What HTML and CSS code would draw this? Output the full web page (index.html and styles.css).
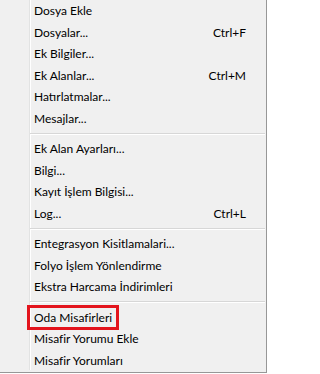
FILE: index.html
```html
<!DOCTYPE html>
<html lang="tr">
<head>
<meta charset="utf-8">
<title>Menü</title>
<link rel="stylesheet" href="styles.css">
</head>
<body>
<div class="menu">
  <div class="item"><span>Dosya Ekle</span></div>
  <div class="item"><span>Dosyalar...</span><span class="key">Ctrl+F</span></div>
  <div class="item"><span>Ek Bilgiler...</span></div>
  <div class="item"><span>Ek Alanlar...</span><span class="key">Ctrl+M</span></div>
  <div class="item"><span>Hatırlatmalar...</span></div>
  <div class="item"><span>Mesajlar...</span></div>
  <div class="sep"></div>
  <div class="item"><span>Ek Alan Ayarları...</span></div>
  <div class="item"><span>Bilgi...</span></div>
  <div class="item"><span>Kayıt İşlem Bilgisi...</span></div>
  <div class="item"><span>Log...</span><span class="key">Ctrl+L</span></div>
  <div class="sep"></div>
  <div class="item"><span>Entegrasyon Kisitlamalari...</span></div>
  <div class="item"><span>Folyo İşlem Yönlendirme</span></div>
  <div class="item"><span>Ekstra Harcama İndirimleri</span></div>
  <div class="sep"></div>
  <div class="item"><span class="hl">Oda Misafirleri</span></div>
  <div class="item"><span>Misafir Yorumu Ekle</span></div>
  <div class="item"><span>Misafir Yorumları</span></div>
</div>
</body>
</html>
```

FILE: styles.css
```css
html, body {
  margin: 0;
  padding: 0;
  background: #ffffff;
}

.menu {
  width: 266px;
  height: 372px;
  border-right: 1px solid #979797;
  border-bottom: 1px solid #979797;
  background:
    linear-gradient(to right,
      transparent 29px,
      #e2e3e3 29px, #e2e3e3 30px,
      #ffffff 30px, #ffffff 31px,
      transparent 31px) no-repeat 0 0 / 100% 370px,
    #f0f0f0;
  font-family: "Lato", "Liberation Sans", sans-serif;
  font-size: 12px;
  color: #000000;
  display: flex;
  flex-direction: column;
}

.item {
  height: 21.5px;
  flex: none;
  display: flex;
  align-items: center;
  justify-content: space-between;
  padding: 0 20px 0 34px;
  white-space: nowrap;
}

.key {
  text-align: right;
}

.sep {
  height: 9px;
  flex: none;
  display: flex;
  align-items: center;
  padding-left: 30px;
  padding-right: 1px;
}

.sep::before {
  content: "";
  flex: 1;
  height: 1px;
  background: #d7d7d7;
  border-bottom: 1px solid #ffffff;
}

.hl {
  position: relative;
}

.hl::before {
  content: "";
  position: absolute;
  left: -7px;
  right: -7px;
  top: -5px;
  bottom: -5px;
  border: 3px solid #e3141d;
}
```
